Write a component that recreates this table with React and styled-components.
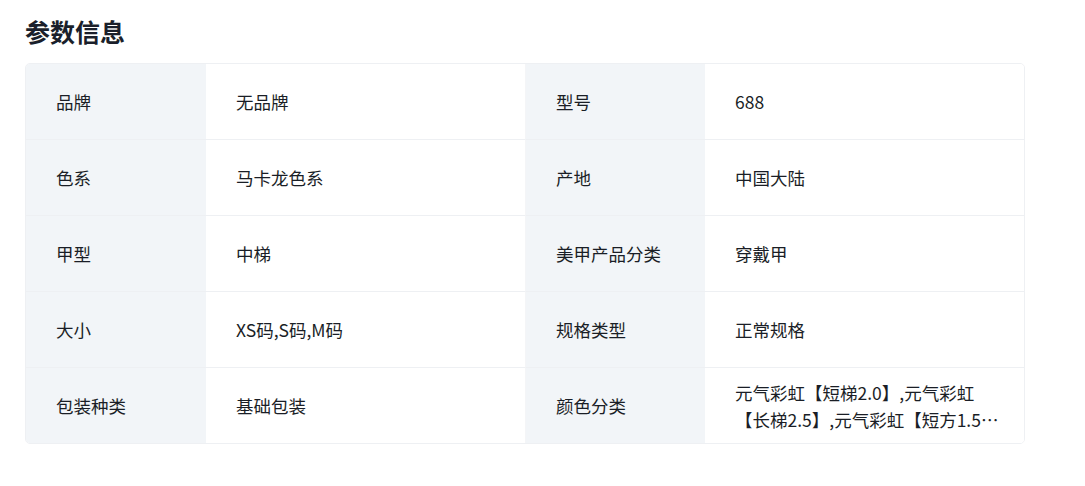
import React from "react";
import styled, { createGlobalStyle } from "styled-components";

const GlobalStyle = createGlobalStyle`
	html, body {
		margin: 0;
		padding: 0;
		background: #ffffff;
	}
	body {
		font-family: "Noto Sans CJK SC", "Noto Sans", sans-serif;
		color: #1a1e26;
	}
`;

const Page = styled.div`
	padding: 14px 25px 0 25px;
`;

const Title = styled.h2`
	margin: 0 0 15px 0;
	font-size: 25px;
	line-height: 34px;
	font-weight: 700;
	color: #1a1f2b;
`;

const Table = styled.div`
	width: 1000px;
	box-sizing: border-box;
	display: grid;
	grid-template-columns: 180px 1fr 180px 1fr;
	border: 1px solid #eef0f3;
	border-radius: 5px;
	overflow: hidden;
`;

const Cell = styled.div`
	height: ${(p) => (p.last ? "75px" : "76px")};
	box-sizing: border-box;
	display: flex;
	align-items: center;
	padding: ${(p) => (p.label ? "0 30px" : "0 18px 0 30px")};
	font-size: 17.5px;
	line-height: 27px;
	background: ${(p) => (p.label ? "#f2f5f8" : "#ffffff")};
	border-bottom: ${(p) => (p.last ? "none" : "1px solid #eef0f3")};
	border-left: ${(p) => (p.split ? "1px solid #f4f5f7" : "none")};
`;

const Clamp = styled.span`
	display: -webkit-box;
	-webkit-box-orient: vertical;
	-webkit-line-clamp: 2;
	overflow: hidden;
`;

const rows = [
	["品牌", "无品牌", "型号", "688"],
	["色系", "马卡龙色系", "产地", "中国大陆"],
	["甲型", "中梯", "美甲产品分类", "穿戴甲"],
	["大小", "XS码,S码,M码", "规格类型", "正常规格"],
	[
		"包装种类",
		"基础包装",
		"颜色分类",
		"元气彩虹【短梯2.0】,元气彩虹【长梯2.5】,元气彩虹【短方1.5】,元气彩虹【长方2.0】",
	],
];

const App = () => {
	return (
		<Page>
			<GlobalStyle />
			<Title>参数信息</Title>
			<Table>
				{rows.map((row, i) => {
					const last = i === rows.length - 1;
					return (
						<React.Fragment key={i}>
							<Cell label last={last}>
								{row[0]}
							</Cell>
							<Cell last={last}>{row[1]}</Cell>
							<Cell label last={last} split>
								{row[2]}
							</Cell>
							<Cell last={last}>
								<Clamp>{row[3]}</Clamp>
							</Cell>
						</React.Fragment>
					);
				})}
			</Table>
		</Page>
	);
};

export default App;
